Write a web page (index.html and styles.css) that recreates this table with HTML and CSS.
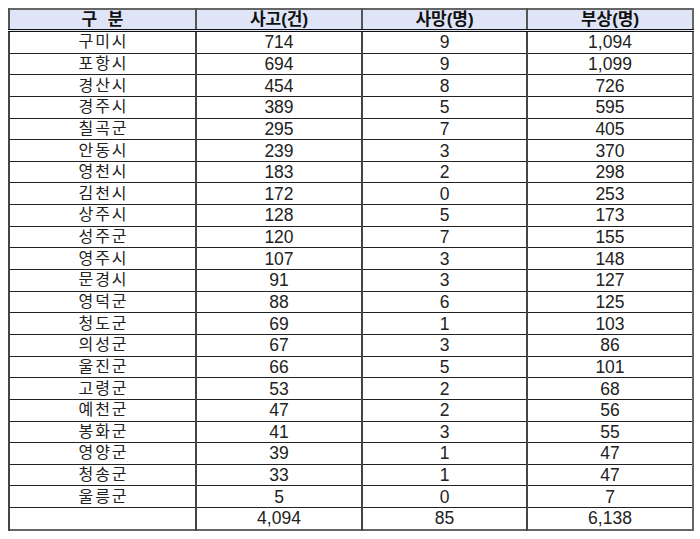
FILE: index.html
```html
<!DOCTYPE html>
<html lang="ko">
<head>
<meta charset="utf-8">
<link rel="stylesheet" href="styles.css">
</head>
<body>
<table class="stats">
<colgroup><col class="c1"><col class="c2"><col class="c3"><col class="c4"></colgroup>
<thead>
<tr><th>구 분</th><th>사고(건)</th><th>사망(명)</th><th>부상(명)</th></tr>
</thead>
<tbody>
<tr><td>구미시</td><td>714</td><td>9</td><td>1,094</td></tr>
<tr><td>포항시</td><td>694</td><td>9</td><td>1,099</td></tr>
<tr><td>경산시</td><td>454</td><td>8</td><td>726</td></tr>
<tr><td>경주시</td><td>389</td><td>5</td><td>595</td></tr>
<tr><td>칠곡군</td><td>295</td><td>7</td><td>405</td></tr>
<tr><td>안동시</td><td>239</td><td>3</td><td>370</td></tr>
<tr><td>영천시</td><td>183</td><td>2</td><td>298</td></tr>
<tr><td>김천시</td><td>172</td><td>0</td><td>253</td></tr>
<tr><td>상주시</td><td>128</td><td>5</td><td>173</td></tr>
<tr><td>성주군</td><td>120</td><td>7</td><td>155</td></tr>
<tr><td>영주시</td><td>107</td><td>3</td><td>148</td></tr>
<tr><td>문경시</td><td>91</td><td>3</td><td>127</td></tr>
<tr><td>영덕군</td><td>88</td><td>6</td><td>125</td></tr>
<tr><td>청도군</td><td>69</td><td>1</td><td>103</td></tr>
<tr><td>의성군</td><td>67</td><td>3</td><td>86</td></tr>
<tr><td>울진군</td><td>66</td><td>5</td><td>101</td></tr>
<tr><td>고령군</td><td>53</td><td>2</td><td>68</td></tr>
<tr><td>예천군</td><td>47</td><td>2</td><td>56</td></tr>
<tr><td>봉화군</td><td>41</td><td>3</td><td>55</td></tr>
<tr><td>영양군</td><td>39</td><td>1</td><td>47</td></tr>
<tr><td>청송군</td><td>33</td><td>1</td><td>47</td></tr>
<tr><td>울릉군</td><td>5</td><td>0</td><td>7</td></tr>
<tr><td></td><td>4,094</td><td>85</td><td>6,138</td></tr>
</tbody>
</table>
</body>
</html>
```
FILE: styles.css
```css
html, body {
  margin: 0;
  padding: 0;
  background: #ffffff;
}
body {
  padding: 8px 0 0 8px;
  font-family: "Liberation Sans", "Noto Sans CJK KR", sans-serif;
  color: #222222;
}
.stats {
  border-collapse: collapse;
  table-layout: fixed;
  width: 684px;
  border: 2px solid #666666;
}
.c1 { width: 187px; }
.c2 { width: 166px; }
.c3 { width: 165px; }
.c4 { width: 166px; }
.stats th {
  background: #dfe5f7;
  font-weight: bold;
  font-size: 17px;
  height: 19px;
  padding: 0;
  line-height: 19px;
  text-align: center;
  border-left: 2px solid #555555;
  border-bottom: 3px double #111111;
  color: #111111;
}
.stats th:first-child {
  letter-spacing: 3px;
  text-indent: 3px;
}
.stats td {
  height: 20.65px;
  padding: 0;
  font-size: 17.5px;
  line-height: 20px;
  text-align: center;
  border-left: 2px solid #444444;
  border-top: 1px solid #222222;
}
.stats td:first-child {
  font-size: 16px;
  letter-spacing: 2px;
  text-indent: 2px;
}
```
